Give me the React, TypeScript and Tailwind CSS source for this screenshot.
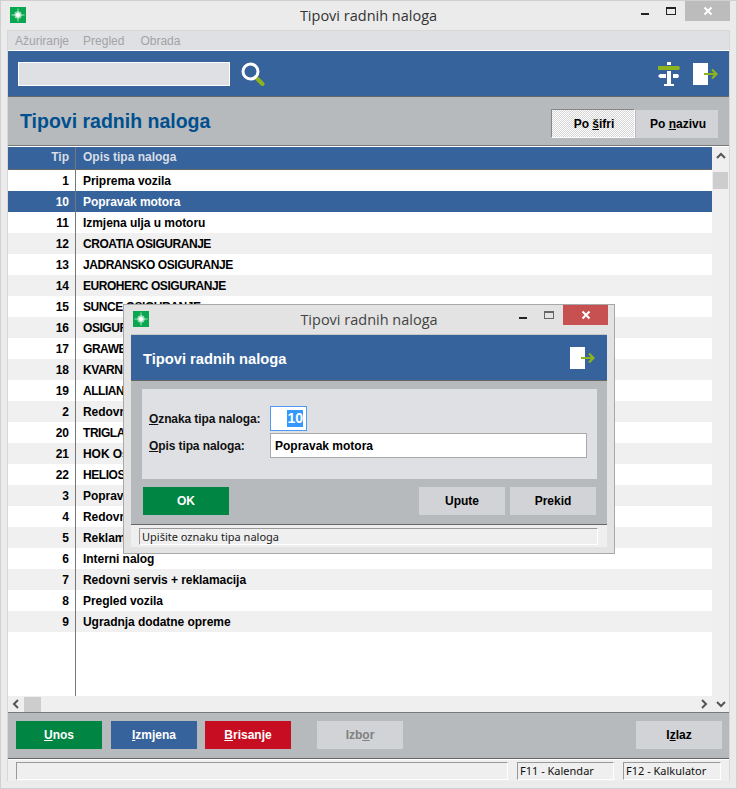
const rows: [string, string][] = [
  ["1", "Priprema vozila"],
  ["10", "Popravak motora"],
  ["11", "Izmjena ulja u motoru"],
  ["12", "CROATIA OSIGURANJE"],
  ["13", "JADRANSKO OSIGURANJE"],
  ["14", "EUROHERC OSIGURANJE"],
  ["15", "SUNCE OSIGURANJE"],
  ["16", "OSIGURANJE"],
  ["17", "GRAWE OSIGURANJE"],
  ["18", "KVARNER OSIGURANJE"],
  ["19", "ALLIANZ OSIGURANJE"],
  ["2", "Redovni servis"],
  ["20", "TRIGLAV OSIGURANJE"],
  ["21", "HOK Osiguranje"],
  ["22", "HELIOS OSIGURANJE"],
  ["3", "Popravak"],
  ["4", "Redovni"],
  ["5", "Reklamacija"],
  ["6", "Interni nalog"],
  ["7", "Redovni servis + reklamacija"],
  ["8", "Pregled vozila"],
  ["9", "Ugradnja dodatne opreme"],
];

const AppIcon = () => (
  <svg width="16" height="16" viewBox="0 0 16 16">
    <defs>
      <radialGradient id="glow">
        <stop offset="0.3" stopColor="#fff" />
        <stop offset="1" stopColor="#fff" stopOpacity="0" />
      </radialGradient>
    </defs>
    <rect width="16" height="16" fill="#0ba750" />
    <path d="M8 1.5v13M1.5 8h13" stroke="#9fe6bd" strokeWidth="1" />
    <path d="M5 5l6 6M11 5l-6 6" stroke="#6fd69b" strokeWidth="1" />
    <circle cx="8" cy="8" r="4.5" fill="url(#glow)" />
  </svg>
);

const ExitIcon = () => (
  <svg width="25" height="22" viewBox="0 0 25 22">
    <rect x="0" y="0" width="15" height="22" fill="#fff" />
    <path d="M11 11h11.5M19 6.5l4.5 4.5-4.5 4.5" fill="none" stroke="#8db41c" strokeWidth="2.2" />
  </svg>
);

const SearchIcon = () => (
  <svg width="24" height="24" viewBox="0 0 24 24">
    <path d="M14.5 15l7 7" stroke="#8db41c" strokeWidth="4" strokeLinecap="round" />
    <circle cx="9.5" cy="9.5" r="7.5" fill="none" stroke="#fff" strokeWidth="3" />
  </svg>
);

const SignIcon = () => (
  <svg width="22" height="24" viewBox="0 0 22 24">
    <rect x="9" y="0" width="4" height="3" fill="#fff" />
    <path d="M0 4h21l1 2-1 2H0z" fill="#8db41c" />
    <rect x="9" y="9" width="4" height="13" fill="#fff" />
    <path d="M0 14l2-2h6v4H2z" fill="#fff" />
    <path d="M15 12h5l1 2-1 2h-5z" fill="#fff" />
    <rect x="6" y="22" width="10" height="2" fill="#fff" />
  </svg>
);

const WinButtons = ({ active }: { active?: boolean }) => (
  <div className="flex items-start">
    <div className="w-[26px] h-5 flex justify-center items-center">
      <div className="w-2 h-[2px] bg-[#222] mt-[6px]" />
    </div>
    <div className="w-[26px] h-5 flex justify-center items-center">
      <div className={`w-[10px] h-2 border border-t-2 ${active ? "border-[#666]" : "border-[#222]"}`} />
    </div>
    <div className={`w-[45px] h-5 flex justify-center items-center ml-[1px] ${active ? "bg-[#c75050]" : "bg-[#bcbcbc]"}`}>
      <svg width="10" height="10" viewBox="0 0 10 10">
        <path d="M1.5 1.5l7 7M8.5 1.5l-7 7" stroke="#fff" strokeWidth="2" />
      </svg>
    </div>
  </div>
);

const ActionButton = ({ className, children }: { className: string; children: React.ReactNode }) => (
  <button className={`h-7 w-[86px] text-xs font-bold ${className}`}>{children}</button>
);

export default function App() {
  return (
    <div className="relative w-[737px] h-[789px] bg-[#ebebeb] border border-[#d0d0d0] flex flex-col overflow-hidden font-['Liberation_Sans',sans-serif] text-xs">
      {/* naslovna traka */}
      <div className="relative h-[29px] flex items-start justify-between pl-[9px] pr-[6px] shrink-0">
        <div className="mt-[6px]"><AppIcon /></div>
        <div className="absolute left-0 right-0 top-[5px] text-center text-[14.5px] text-[#333] font-['Open_Sans',sans-serif]">Tipovi radnih naloga</div>
        <WinButtons />
      </div>

      <div className="ml-[6px] w-[723px] h-[751px] flex flex-col border border-[#d8d8d8] border-b-0 bg-[#dfe0e3]">
        <div className="h-[19px] flex items-center gap-[14px] px-[7px] text-[#a3a3a3] shrink-0">
          <span>Ažuriranje</span>
          <span>Pregled</span>
          <span className="ml-[2px]">Obrada</span>
        </div>
        <div className="h-[47px] bg-[#36639b] border-t border-white border-b border-b-[#666] flex items-center pl-[10px] pr-[11px] shrink-0">
          <div className="w-[212px] h-6 bg-[#dfe0e3] border border-white" />
          <div className="ml-[11px]"><SearchIcon /></div>
          <div className="ml-auto flex items-center gap-[13px]">
            <SignIcon />
            <ExitIcon />
          </div>
        </div>
        <div className="h-[49px] bg-[#b7babd] border-b border-b-[#77797b] flex items-center justify-between pl-3 pr-[11px] shrink-0">
          <div className="text-[19.5px] font-bold text-[#004f8f]">Tipovi radnih naloga</div>
          <div className="flex items-center mt-[5px]">
            <button className="w-[84px] h-[29px] pl-[2px] bg-[conic-gradient(#d4d4d4_25%,#fff_0_50%,#d4d4d4_0_75%,#fff_0)] bg-[length:2px_2px] border border-t-[#888] border-l-[#888] border-r-white border-b-white font-bold text-black">
              Po <u>š</u>ifri
            </button>
            <button className="w-[82px] h-[28px] pl-[2px] ml-[1px] bg-[#d1d3d6] font-bold text-black">
              Po <u>n</u>azivu
            </button>
          </div>
        </div>

        <div className="bg-white flex-1 flex min-h-0 border-t border-white">
          <div className="flex-1 flex flex-col min-w-0">
            <div className="relative flex-1 min-h-0">
              <div className="h-[23px] pb-[2px] bg-[#36639b] border-b border-[#666] flex items-center font-bold text-[#d8dde6]">
                <div className="w-[61px] text-right">Tip</div>
                <div className="pl-[14px]">Opis tipa naloga</div>
              </div>
              {rows.map(([code, name], i) => (
                <div
                  key={code}
                  className={`h-[21px] flex items-center font-bold ${
                    i === 1 ? "bg-[#36639b] text-white" : i % 2 === 1 ? "bg-[#f0f0f0] text-black" : "bg-white text-black"
                  }`}
                >
                  <div className="w-[61px] text-right">{code}</div>
                  <div className={`pl-[14px] ${name === name.toUpperCase() ? "tracking-[-0.45px]" : "tracking-[-0.05px]"}`}>{name}</div>
                </div>
              ))}
              {/* crta izmedju stupaca */}
              <div className="absolute left-[67px] top-0 bottom-0 w-px bg-[#777]" />
            </div>
            <div className="h-[16px] bg-[#efefef] flex items-center justify-between shrink-0">
              <div className="flex items-center">
                <svg width="16" height="16" viewBox="0 0 16 16"><path d="M10 4l-4 4 4 4" fill="none" stroke="#555" strokeWidth="2" /></svg>
                <div className="w-[17px] h-[15px] bg-[#cdcdcd]" />
              </div>
              <svg width="16" height="16" viewBox="0 0 16 16"><path d="M6 4l4 4-4 4" fill="none" stroke="#555" strokeWidth="2" /></svg>
            </div>
          </div>
          <div className="w-[17px] bg-[#efefef] flex flex-col items-center shrink-0">
            <svg className="mt-[1px]" width="16" height="16" viewBox="0 0 16 16"><path d="M4 10l4-4 4 4" fill="none" stroke="#555" strokeWidth="2" /></svg>
            <div className="w-[15px] h-[17px] mt-2 bg-[#cdcdcd]" />
            <svg className="mt-auto" width="16" height="16" viewBox="0 0 16 16"><path d="M4 6l4 4 4-4" fill="none" stroke="#555" strokeWidth="2" /></svg>
          </div>
        </div>

        <div className="h-[47px] pb-[1px] bg-[#b7babd] border-t border-[#777] border-b border-b-[#666] flex items-center px-2 shrink-0">
          <ActionButton className="bg-[#008542] text-white"><u>U</u>nos</ActionButton>
          <ActionButton className="ml-[9px] bg-[#36639b] text-white"><u>I</u>zmjena</ActionButton>
          <ActionButton className="ml-2 bg-[#c70d22] text-white"><u>B</u>risanje</ActionButton>
          <ActionButton className="ml-[26px] bg-[#d1d3d6] text-[#808080]">Izb<u>o</u>r</ActionButton>
          <ActionButton className="ml-auto mr-[-1px] bg-[#d1d3d6] text-black">I<u>z</u>laz</ActionButton>
        </div>

        <div className="h-[22px] bg-[#efefef] border-t border-white flex items-center gap-[9px] pl-2 pr-2 shrink-0">
          <div className="w-[492px] h-[18px] border-t border-l border-[#999] border-r border-r-white border-b border-b-white" />
          <div className="w-[97px] h-[18px] border-t border-l border-[#999] border-r border-r-white border-b border-b-white pl-[2px] leading-[16px] text-[#111] font-['Noto_Sans',sans-serif] text-[11px]">F11 - Kalendar</div>
          <div className="w-[98px] h-[18px] border-t border-l border-[#999] border-r border-r-white border-b border-b-white pl-[2px] leading-[16px] text-[#111] font-['Noto_Sans',sans-serif] text-[11px]">F12 - Kalkulator</div>
        </div>
      </div>

      {/* dijalog */}
      <div className="absolute left-[122px] top-[303px] w-[492px] h-[250px] bg-[#e3e3e3] border border-[#a8a8a8] flex flex-col">
        <div className="relative h-[29px] flex items-start justify-between pl-[9px] shrink-0">
          <div className="mt-[6px]"><AppIcon /></div>
          <div className="absolute left-0 right-0 top-[5px] text-center text-[14.5px] text-[#444] font-['Open_Sans',sans-serif]">Tipovi radnih naloga</div>
          <div className="mr-[6px]"><WinButtons active /></div>
        </div>
        <div className="mx-[7px] h-[213px] border-t border-[#c8c8c8] flex flex-col bg-[#b7babd]">
          <div className="h-[46px] bg-[#36639b] border-b border-b-[#666] flex items-center justify-between pl-3 pr-3 shrink-0">
            <div className="text-[14.7px] font-bold text-white mt-[5px]">Tipovi radnih naloga</div>
            <ExitIcon />
          </div>
          <div className="mt-2 ml-[11px] mr-[10px] h-[90px] bg-[#dfe0e3] px-[7px] pt-[17px] shrink-0">
            <div className="flex items-center h-[25px]">
              <div className="w-[121px] font-bold text-[#111] tracking-[-0.1px]"><u>O</u>znaka tipa naloga:</div>
              <div className="w-[37px] h-[25px] bg-white border border-[#4d9bf5] flex items-center justify-end pr-[3px]">
                <span className="bg-[#3399ff] text-white font-bold text-sm leading-[17px]">10</span>
              </div>
            </div>
            <div className="flex items-center h-[25px] mt-[2px]">
              <div className="w-[121px] font-bold text-[#111] tracking-[-0.1px]"><u>O</u>pis tipa naloga:</div>
              <div className="w-[317px] h-[25px] bg-white border border-[#aaa] flex items-center pl-1 font-bold text-black">Popravak motora</div>
            </div>
          </div>
          <div className="mt-2 flex pl-3 pr-[11px] shrink-0">
            <button className="h-7 w-[86px] bg-[#008542] text-white font-bold">OK</button>
            <button className="h-7 w-[86px] ml-auto bg-[#d1d3d6] text-black font-bold">Upute</button>
            <button className="h-7 w-[86px] ml-[5px] bg-[#d1d3d6] text-black font-bold">Prekid</button>
          </div>
          <div className="mt-[9px] flex-1 bg-[#efefef] border-t border-t-[#666] pl-2 pr-[9px] pt-[3px]">
            <div className="h-[17px] border-t border-l border-[#999] border-r border-r-white border-b border-b-white pl-[2px] leading-[16px] text-[#222] font-['Noto_Sans',sans-serif] text-[11px]">Upišite oznaku tipa naloga</div>
          </div>
        </div>
      </div>
    </div>
  );
}
